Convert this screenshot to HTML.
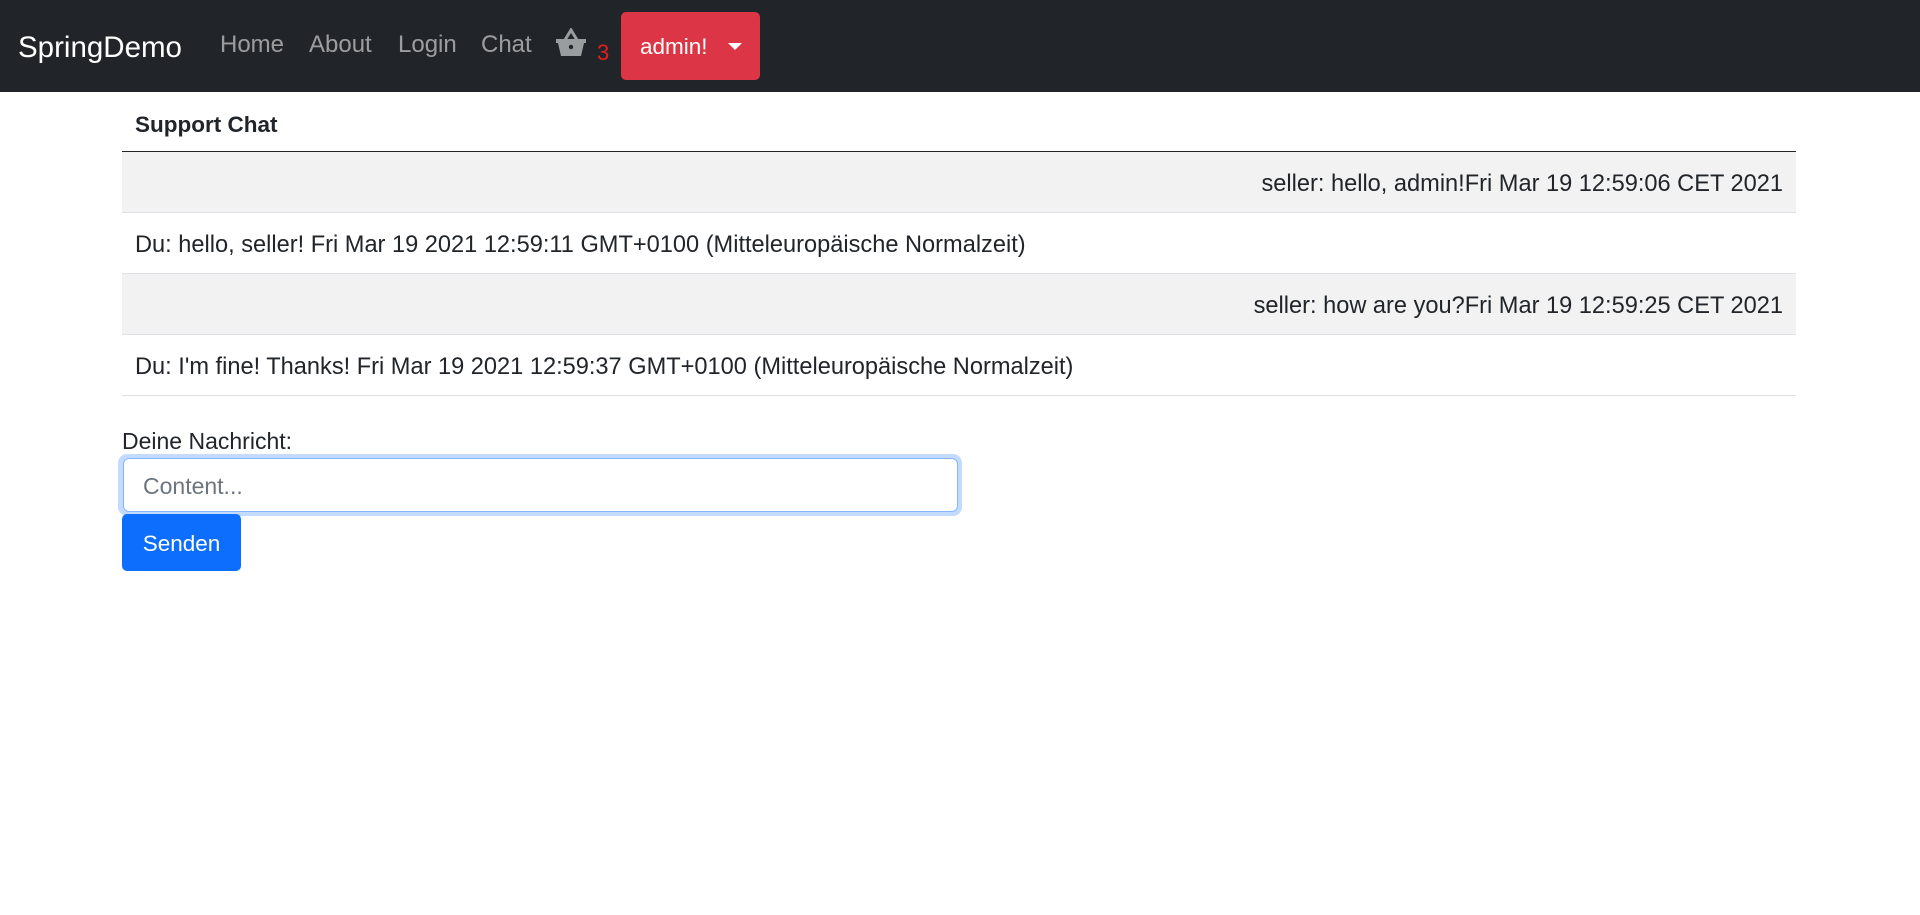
<!DOCTYPE html>
<html><head><meta charset="utf-8"><style>
*{box-sizing:border-box;margin:0;padding:0}
body{width:1920px;height:915px;background:#fff;font-family:"Liberation Sans",sans-serif;color:#212529;font-size:23px;position:relative;overflow:hidden}
.nav{position:absolute;left:0;top:0;width:1920px;height:92px;background:#212529}
.nav span{position:absolute;top:31px;font-size:24px;color:rgba(255,255,255,.55)}
.brand{left:18px!important;color:#fff!important;font-size:29.5px!important;top:31px!important}
.btn{position:absolute;left:621px;top:12px;width:139px;height:68px;background:#dc3545;border-radius:5px;color:#fff;font-size:22.5px;line-height:70px;padding-left:19px}
.caret{position:absolute;right:18px;top:31px;border-left:7px solid transparent;border-right:7px solid transparent;border-top:7px solid #fff}
.tbl{position:absolute;left:122px;top:100px;width:1674px}
.th{height:52px;font-weight:bold;padding:12px 13px;border-bottom:1.5px solid #212529;font-size:22.5px}
.row{height:61px;border-bottom:1px solid #dee2e6;padding:0 13px;line-height:64px;white-space:nowrap;font-size:23.6px}
.g{background:#f2f2f2;text-align:right}
</style></head><body>
<div class="nav">
<span class="brand">SpringDemo</span>
<span style="left:220px">Home</span>
<span style="left:309px">About</span>
<span style="left:398px">Login</span>
<span style="left:481px">Chat</span>
<svg style="position:absolute;left:555px;top:28px" width="32" height="30" viewBox="0 0 32 30"><path d="M10 12 L16 2 L22 12" stroke="#9a9da0" stroke-width="3" fill="none"/><path d="M1 11 H31 V15 H29 L26 28 H6 L3 15 H1Z" fill="#9a9da0"/><circle cx="16" cy="19" r="2.2" fill="#212529"/></svg>
<span style="left:597px;top:40px;color:#e02020;font-size:22px">3</span>
<div class="btn">admin!<div class="caret"></div></div>
</div>
<div class="tbl">
<div class="th">Support Chat</div>
<div class="row g">seller: hello, admin!Fri Mar 19 12:59:06 CET 2021</div>
<div class="row">Du: hello, seller! Fri Mar 19 2021 12:59:11 GMT+0100 (Mitteleuropäische Normalzeit)</div>
<div class="row g">seller: how are you?Fri Mar 19 12:59:25 CET 2021</div>
<div class="row">Du: I'm fine! Thanks! Fri Mar 19 2021 12:59:37 GMT+0100 (Mitteleuropäische Normalzeit)</div>
</div>
<div style="position:absolute;left:122px;top:428px">Deine Nachricht:</div>
<div style="position:absolute;left:118px;top:454px;width:844px;height:62px;border-radius:9px;background:#c2dbfe"></div>
<div style="position:absolute;left:123px;top:458px;width:835px;height:54px;border:1px solid #86b7fe;border-radius:6px;background:#fff;padding:0 19px;line-height:54px;color:#6c757d">Content...</div>
<div style="position:absolute;left:122px;top:514px;width:119px;height:57px;background:#0d6efd;border-radius:5px;color:#fff;text-align:center;line-height:59px;font-size:22.5px">Senden</div>
</body></html>
